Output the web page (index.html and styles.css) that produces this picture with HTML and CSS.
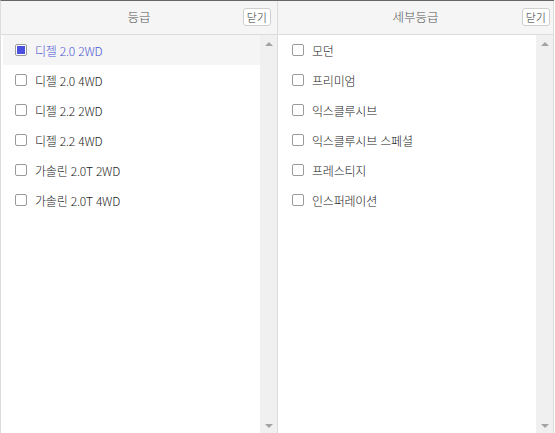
FILE: index.html
```html
<!DOCTYPE html>
<html lang="ko">
<head>
<meta charset="utf-8">
<link rel="stylesheet" href="styles.css">
</head>
<body>
<div class="wrap">
  <section class="panel panel-left">
    <header class="head">
      <span></span>
      <span class="title">등급</span>
      <button class="close">닫기</button>
    </header>
    <div class="body">
      <ul class="list">
        <li class="row on"><span class="box"></span>디젤 2.0 2WD</li>
        <li class="row"><span class="box"></span>디젤 2.0 4WD</li>
        <li class="row"><span class="box"></span>디젤 2.2 2WD</li>
        <li class="row"><span class="box"></span>디젤 2.2 4WD</li>
        <li class="row"><span class="box"></span>가솔린 2.0T 2WD</li>
        <li class="row"><span class="box"></span>가솔린 2.0T 4WD</li>
      </ul>
      <div class="scroll"><span class="up"></span><span class="down"></span></div>
    </div>
  </section>
  <section class="panel panel-right">
    <header class="head">
      <span></span>
      <span class="title">세부등급</span>
      <button class="close">닫기</button>
    </header>
    <div class="body">
      <ul class="list">
        <li class="row"><span class="box"></span>모던</li>
        <li class="row"><span class="box"></span>프리미엄</li>
        <li class="row"><span class="box"></span>익스클루시브</li>
        <li class="row"><span class="box"></span>익스클루시브 스페셜</li>
        <li class="row"><span class="box"></span>프레스티지</li>
        <li class="row"><span class="box"></span>인스퍼레이션</li>
      </ul>
      <div class="scroll"><span class="up"></span><span class="down"></span></div>
    </div>
  </section>
</div>
</body>
</html>
```

FILE: styles.css
```css
* { box-sizing: border-box; }
html, body { margin: 0; padding: 0; background: #fff; }
body {
  font-family: "Noto Sans CJK KR", "Noto Sans", sans-serif;
  font-size: 12px;
  font-weight: 300;
  color: #222;
}
.wrap {
  display: flex;
  width: 554px;
  height: 433px;
  border-top: 1px solid #666;
  border-left: 1px solid #dcdcdc;
}
.panel {
  display: flex;
  flex-direction: column;
  border-right: 1px solid #dcdcdc;
}
.panel-left { width: 277px; }
.panel-right { width: 276px; }
.head {
  height: 34px;
  flex: none;
  display: grid;
  grid-template-columns: 1fr auto 1fr;
  align-items: center;
  background: #f5f5f5;
  border-bottom: 1px solid #dcdcdc;
}
.title {
  color: #555;
  font-size: 12.5px;
  line-height: 1;
  padding-bottom: 1px;
}
.close {
  justify-self: end;
  height: 18px;
  padding: 0 3px;
  font-family: inherit;
  font-weight: 300;
  font-size: 11px;
  line-height: 15px;
  color: #333;
  background: #fff;
  border: 1px solid #cfcfcf;
  border-radius: 3px;
  margin-bottom: 1px;
}
.panel-left .close { margin-right: 6px; }
.panel-right .close { margin-right: 3px; }
.body {
  flex: 1;
  display: flex;
  min-height: 0;
}
.list {
  flex: 1;
  list-style: none;
  margin: 0;
  padding: 0 0 0 2px;
}
.row {
  height: 30px;
  display: flex;
  align-items: center;
  padding-left: 12px;
  padding-top: 1px;
  gap: 8px;
  line-height: 1;
  letter-spacing: -0.2px;
}
.row.on {
  background: #f5f5f5;
  color: #4c55d4;
}
.box {
  width: 12px;
  height: 12px;
  margin-top: -1px;
  border: 1px solid #9a9a9a;
  border-radius: 2px;
  background: #fff;
  flex: none;
  display: flex;
  align-items: center;
  justify-content: center;
}
.row.on .box::after {
  content: "";
  width: 8px;
  height: 8px;
  background: #4a4fe0;
}
.scroll {
  width: 17px;
  flex: none;
  background: #f0f0f0;
  display: flex;
  flex-direction: column;
  justify-content: space-between;
  align-items: center;
  padding: 7px 0 5px;
}
.up, .down {
  width: 0;
  height: 0;
  border-left: 4px solid transparent;
  border-right: 4px solid transparent;
}
.up { border-bottom: 4px solid #a3a3a3; }
.down { border-top: 4px solid #a3a3a3; }
```
